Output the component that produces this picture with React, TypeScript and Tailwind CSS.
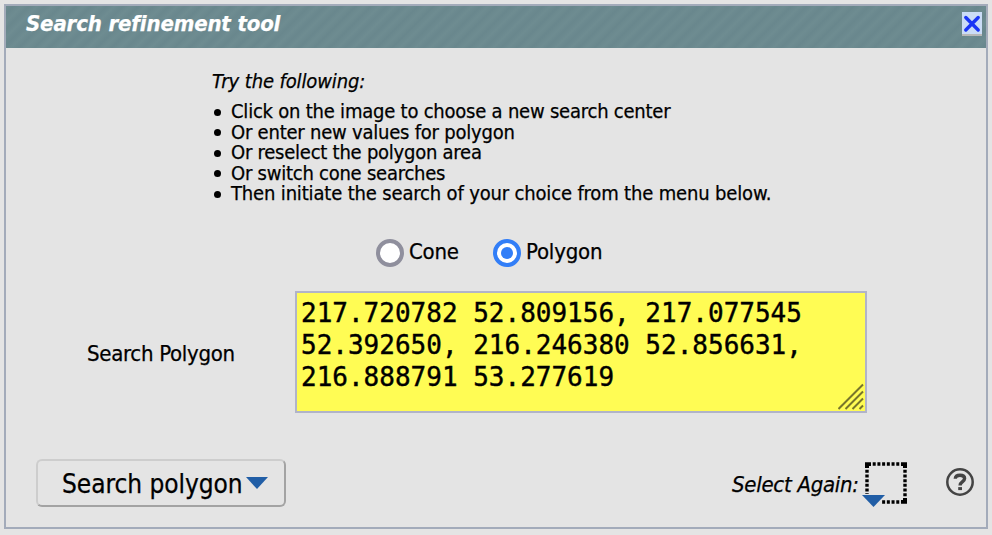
const sans = "font-['DejaVu_Sans_Condensed','DejaVu_Sans',sans-serif] [font-stretch:condensed] [-webkit-text-stroke:0.25px]";

const tips = [
  { text: 'Click on the image to choose a new search center', spacing: 'tracking-[-0.22px]' },
  { text: 'Or enter new values for polygon', spacing: 'tracking-[-0.22px]' },
  { text: 'Or reselect the polygon area', spacing: 'tracking-[-0.24px]' },
  { text: 'Or switch cone searches', spacing: 'tracking-[-0.24px]' },
  { text: 'Then initiate the search of your choice from the menu below.', spacing: 'tracking-[-0.16px]' },
];

function CloseIcon() {
  return (
    <svg width="20" height="24" viewBox="0 0 20 24">
      <rect width="20" height="22" fill="#cbdcf6" />
      <rect y="22" width="20" height="2" fill="#b8b8b8" />
      <path d="M3.8 5.5 L16.2 18 M16.2 5.5 L3.8 18" stroke="#1a35f5" strokeWidth="3.4" strokeLinecap="round" />
    </svg>
  );
}

function HelpIcon() {
  return (
    <svg width="28" height="28" viewBox="0 0 28 28" fill="none" stroke="#444">
      <circle cx="14" cy="14" r="12.7" strokeWidth="2.5" />
      <path d="M9.3 10.8 C9.4 8.2 11.3 7.2 14 7.2 C16.8 7.2 18.6 8.5 18.6 10.6 C18.6 13.6 14.1 13.6 14.1 17.4" strokeWidth="3.4" />
      <path d="M12.2 20.6 H16" strokeWidth="3" />
    </svg>
  );
}

function SelectIcon() {
  return (
    <svg width="46" height="46" viewBox="0 0 46 46">
      <g stroke="#000" strokeWidth="3.4" strokeDasharray="3 1.714">
        <path d="M10.7 2 H39 M5 7.7 V36 M43 7.7 V36 M10.7 40 H39" fill="none" />
      </g>
      <path d="M3 6 V0.3 H9 V4 H7 V6 Z M39 0.3 H45 V6 H41 V4 H39 Z M45 36 V41.7 H39 V38 H41 V36 Z" />
      <rect x="0" y="32" width="19" height="11" fill="#e4e4e4" />
      <path d="M0 33 H23 L11.5 45 Z" fill="#215ea6" />
    </svg>
  );
}

export default function App() {
  return (
    <div className={`h-[535px] w-[992px] bg-[#e4e4e4] px-1 pt-1 text-black ${sans}`}>
      <section className="flex h-[525px] w-[984px] flex-col border-2 border-[#a3abba] bg-[#e4e4e4]">
        <header className="flex h-[42px] shrink-0 items-start justify-between bg-[#6a888e] bg-[repeating-linear-gradient(135deg,#6e8c91_0px,#69878d_5.5px,#6e8c91_11px)] pr-1 pl-5">
          <h1 className="mt-[5px] text-[22px] leading-[26px] font-bold tracking-[-0.15px] whitespace-nowrap text-white italic">Search refinement tool</h1>
          <button className="mt-1.5" aria-label="Close"><CloseIcon /></button>
        </header>
        <div className="h-[187px] shrink-0 pt-[22px] pl-[206px]">
          <p className="text-[20px] leading-[22px] tracking-[-0.12px] italic">Try the following:</p>
          <ul className="mt-[9px]">
            {tips.map((tip) => (
              <li key={tip.text} className="flex h-[20.5px] items-center text-[20px] leading-[20.5px] whitespace-nowrap">
                <i className="mt-[2px] mr-[10px] ml-[2px] size-[7px] shrink-0 rounded-full bg-black" />
                <span className={tip.spacing}>{tip.text}</span>
              </li>
            ))}
          </ul>
        </div>
        <div className="flex h-[56px] shrink-0 items-start pt-1 pl-[370px] text-[22px] leading-[26px]">
          <span className="size-7 shrink-0 rounded-full border-4 border-[#8f8f9d] bg-white" />
          <span className="ml-[5px] w-[84px] tracking-[-0.25px]">Cone</span>
          <span className="flex size-7 shrink-0 items-center justify-center rounded-full border-4 border-[#327ef7] bg-white"><i className="size-3 rounded-full bg-[#327ef7]" /></span>
          <span className="ml-[5px] tracking-[-0.2px]">Polygon</span>
        </div>
        <div className="flex h-[122px] shrink-0 items-center pl-[81px]">
          <span className="mt-0.5 w-[208px] shrink-0 text-[22px] tracking-[-0.3px] whitespace-nowrap">Search Polygon</span>
          <div className="flex h-[122px] w-[572px] flex-col justify-between border-2 border-[#b1b4c8] bg-[#fffc54] pt-1 pr-px pl-1 font-['DejaVu_Sans_Mono',monospace] text-[26px] leading-8 [-webkit-text-stroke:0.4px]">
            <div className="h-24 whitespace-pre">{'217.720782 52.809156, 217.077545\n52.392650, 216.246380 52.856631,\n216.888791 53.277619'}</div>
            <svg className="-mt-8 shrink-0 self-end" width="26" height="28" viewBox="0 0 26 28" stroke="#77752b" strokeWidth="2">
              <path d="M0.5 26 L25 1.5 M7.5 26 L25 8.5 M14.5 26 L25 15.5 M21.5 26 L25 22.5" />
            </svg>
          </div>
        </div>
        <footer className="flex h-[94px] items-start pt-[46px] pl-[30px]">
          <button className="flex h-12 w-[250px] shrink-0 items-center rounded-md border-2 border-t-[#cdcdcd] border-r-[#a3a3a3] border-b-[#a3a3a3] border-l-[#cdcdcd] pl-[24px]">
            <span className="mt-0.5 w-[184px] text-left text-[26px] tracking-[-0.05px] whitespace-nowrap">Search polygon</span>
            <svg width="22" height="12" viewBox="0 0 22 12"><path d="M0 0 H22 L11 12 Z" fill="#215ea6" /></svg>
          </button>
          <span className="mt-[13px] ml-[446px] w-[130px] shrink-0 text-[22px] leading-[26px] tracking-[-0.28px] whitespace-nowrap italic">Select Again:</span>
          <span className="mt-[3px] shrink-0"><SelectIcon /></span>
          <span className="mt-[9px] ml-[38px] shrink-0"><HelpIcon /></span>
        </footer>
      </section>
    </div>
  );
}
